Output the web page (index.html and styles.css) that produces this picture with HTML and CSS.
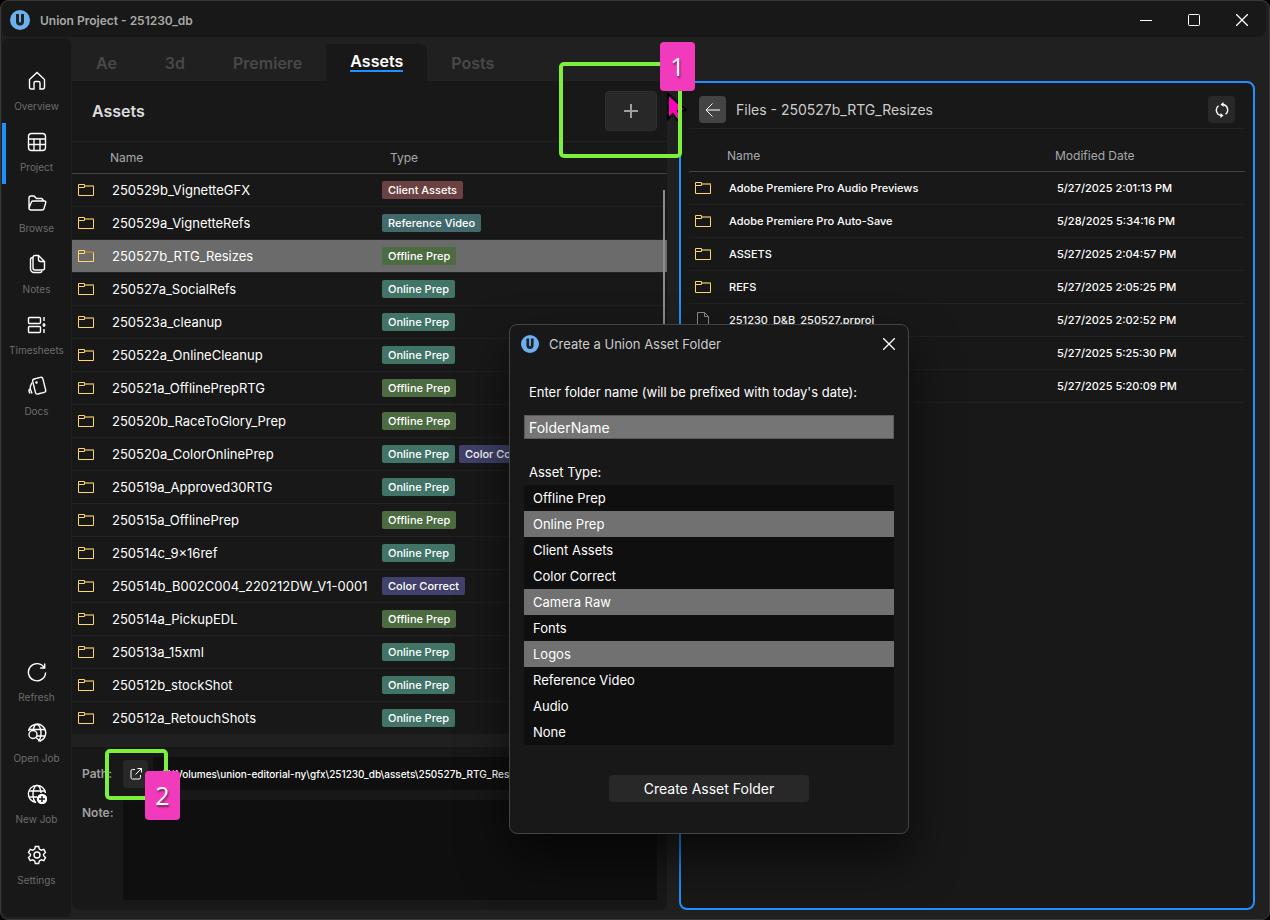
FILE: index.html
```
<!DOCTYPE html>
<html lang="en">
<head>
<meta charset="UTF-8">
<meta name="viewport" content="width=device-width, initial-scale=1.0">
<title>Union Project - 251230_db</title>
<link rel="stylesheet" href="styles.css">
</head>

<body>

<svg class="sprite" aria-hidden="true">
<symbol id="folder" viewBox="0 0 16 12">
<path d="M7 1h9v2H7z" fill="#9c8444" stroke="none"/>
<path d="M.5 3.5v-3h6v3h-6v8h15v-9" stroke="#ffd76e"/>
</symbol>
<symbol id="file" viewBox="0 0 16 16">
<path d="M2.500 15.500V.5h7l4 4v11zM9.500.5v4h4" stroke="#8a8a8a"/>
</symbol>
<symbol id="logo" viewBox="0 0 20 20">
<circle cx="10" cy="10" r="10" fill="#6cb1ec" stroke="none"/>
<path d="M7.500 4v7.500a2.500 2.500 0 0 0 5 0V4" stroke="#1f2328" stroke-width="3"/>
</symbol>
<symbol id="close" viewBox="0 0 12 12">
<path d="M0 0l12 12M12 0L0 12" stroke-width="1.300"/>
</symbol>
</svg>

<div class="window">

<header class="titlebar">
<svg class="logo"><use href="#logo"/></svg>
<h1>Union Project - 251230_db</h1>
<div class="window-buttons">
<button aria-label="Minimize"><svg viewBox="0 0 12 12"><path d="M0 6.500h12"/></svg></button>
<button aria-label="Maximize"><svg viewBox="0 0 12 12"><rect x=".5" y=".5" width="11" height="11" rx="1"/></svg></button>
<button aria-label="Close"><svg><use href="#close"/></svg></button>
</div>
</header>

<div class="main">

<nav class="sidebar">
<div class="group">
<a href="#"><svg viewBox="0 0 20 20"><path d="M2.500 8.500 10 1.500l7.500 7V16a2 2 0 0 1-2 2H13v-6a1.500 1.500 0 0 0-1.500-1.500h-3A1.500 1.500 0 0 0 7 12v6H4.500a2 2 0 0 1-2-2z"/></svg>Overview</a>
<a href="#" class="active"><svg viewBox="0 0 20 20"><rect x="1.500" y="1.500" width="17" height="17" rx="3"/><path d="M1.500 7h17M1.500 12.500h17M7 7v11.500M13 7v11.500"/></svg>Project</a>
<a href="#"><svg viewBox="0 0 20 20"><path d="M2 15V5a2 2 0 0 1 2-2h3l2.500 2.500H14a2 2 0 0 1 2 2V8M2 15l2.200-5.500A2 2 0 0 1 6 8h11.500c1 0 1.500.8 1.200 1.700L17 15.500a2 2 0 0 1-2 1.500H4a2 2 0 0 1-2-2z"/></svg>Browse</a>
<a href="#"><svg viewBox="0 0 20 20"><path d="M11.500 1.500H8a2 2 0 0 0-2 2V14a2 2 0 0 0 2 2h7.500a2 2 0 0 0 2-2V7.500zM11.500 1.500v4a2 2 0 0 0 2 2h4M6 3.500A2 2 0 0 0 3.500 5.500V15a3.500 3.500 0 0 0 3.500 3.500h6a2 2 0 0 0 2-1.500"/></svg>Notes</a>
<a href="#"><svg viewBox="0 0 20 20"><rect x="1.500" y="2.500" width="12" height="6" rx="1"/><rect x="1.500" y="11.500" width="12" height="6" rx="1"/><path d="M17 2v4M17 14v4M17 8v4M15.500 10h3"/></svg>Timesheets</a>
<a href="#"><svg viewBox="0 0 20 20"><rect x="7" y="2" width="10.500" height="15.500" rx="2" transform="rotate(-14 12 10)"/><path d="M5 6.500 3.500 10c-.5 1.500-.5 2 0 3.500L5 17.500M2.500 13c-1 1.500-.5 3 .5 4.500"/><circle cx="9.500" cy="6.500" r=".6"/></svg>Docs</a>
</div>
<div class="group">
<a href="#"><svg viewBox="0 0 20 20"><path d="M17.500 6A8.600 8.600 0 1 0 18.600 10.500M17.700 1.500v4.500h-4.500"/></svg>Refresh</a>
<a href="#"><svg viewBox="0 0 20 20"><path d="M1.500 8A8.700 8.700 0 1 1 13 18M2.500 6.500h15.500M10 13h8.500M6.200 8c.3-4 1.800-6.500 3.800-6.500s4 4 4 8.500-1.500 8-3 8"/><circle cx="6" cy="11.500" r="4"/><path d="m9 14.500 4.500 4"/></svg>Open Job</a>
<a href="#"><svg viewBox="0 0 20 20"><path d="M9 18.500A8.600 8.600 0 1 1 18.500 9M2 7h16M2 13h8M9 18.500C7.300 17.500 6 14 6 10s1.500-8.500 4-8.500S13.700 5.500 14 9"/><circle cx="15" cy="15" r="4.500" class="dot"/><path class="plus" d="M15 12v6M12 15h6"/></svg>New Job</a>
<a href="#"><svg viewBox="0 0 20 20"><path d="M8.300 1.500h3.400l.6 2.600 2 1.100 2.500-.8 1.700 3-1.900 1.800v1.600l1.900 1.800-1.700 3-2.500-.8-2 1.100-.6 2.600H8.300l-.6-2.600-2-1.100-2.500.8-1.700-3 1.900-1.800V9.200L1.500 7.400l1.700-3 2.500.8 2-1.100z"/><circle cx="10" cy="10" r="3"/></svg>Settings</a>
</div>
</nav>

<section class="assets">
<div class="tabs">
<a href="#">Ae</a>
<a href="#">3d</a>
<a href="#">Premiere</a>
<a href="#" class="active"><span>Assets</span></a>
<a href="#">Posts</a>
</div>

<div class="assets-head">
<h2>Assets</h2>
<div class="add">
<button aria-label="Add asset folder"><svg viewBox="0 0 14 14"><path d="M7 0v14M0 7h14"/></svg></button>
<div class="mark mark-add"></div>
<div class="badge badge-add">1</div>
<svg class="pointer" viewBox="0 0 20 28"><path d="M1 1v25l5-5 4 6 4-3-3-6 8-1z"/></svg>
</div>
</div>

<div class="list">
<table>
<colgroup><col class="col-icon"><col class="col-name"><col></colgroup>
<thead>
<tr><th></th><th>Name</th><th class="type">Type</th></tr>
</thead>
<tbody>
<tr><td><svg class="folder"><use href="#folder"/></svg></td><td>250529b_VignetteGFX</td><td><span class="tag client">Client Assets</span></td></tr>
<tr><td><svg class="folder"><use href="#folder"/></svg></td><td>250529a_VignetteRefs</td><td><span class="tag reference">Reference Video</span></td></tr>
<tr class="selected"><td><svg class="folder"><use href="#folder"/></svg></td><td>250527b_RTG_Resizes</td><td><span class="tag offline">Offline Prep</span></td></tr>
<tr><td><svg class="folder"><use href="#folder"/></svg></td><td>250527a_SocialRefs</td><td><span class="tag online">Online Prep</span></td></tr>
<tr><td><svg class="folder"><use href="#folder"/></svg></td><td>250523a_cleanup</td><td><span class="tag online">Online Prep</span></td></tr>
<tr><td><svg class="folder"><use href="#folder"/></svg></td><td>250522a_OnlineCleanup</td><td><span class="tag online">Online Prep</span></td></tr>
<tr><td><svg class="folder"><use href="#folder"/></svg></td><td>250521a_OfflinePrepRTG</td><td><span class="tag offline">Offline Prep</span></td></tr>
<tr><td><svg class="folder"><use href="#folder"/></svg></td><td>250520b_RaceToGlory_Prep</td><td><span class="tag offline">Offline Prep</span></td></tr>
<tr><td><svg class="folder"><use href="#folder"/></svg></td><td>250520a_ColorOnlinePrep</td><td><span class="tag online">Online Prep</span><span class="tag color">Color Correct</span></td></tr>
<tr><td><svg class="folder"><use href="#folder"/></svg></td><td>250519a_Approved30RTG</td><td><span class="tag online">Online Prep</span></td></tr>
<tr><td><svg class="folder"><use href="#folder"/></svg></td><td>250515a_OfflinePrep</td><td><span class="tag offline">Offline Prep</span></td></tr>
<tr><td><svg class="folder"><use href="#folder"/></svg></td><td>250514c_9x16ref</td><td><span class="tag online">Online Prep</span></td></tr>
<tr><td><svg class="folder"><use href="#folder"/></svg></td><td>250514b_B002C004_220212DW_V1-0001</td><td><span class="tag color">Color Correct</span></td></tr>
<tr><td><svg class="folder"><use href="#folder"/></svg></td><td>250514a_PickupEDL</td><td><span class="tag offline">Offline Prep</span></td></tr>
<tr><td><svg class="folder"><use href="#folder"/></svg></td><td>250513a_15xml</td><td><span class="tag online">Online Prep</span></td></tr>
<tr><td><svg class="folder"><use href="#folder"/></svg></td><td>250512b_stockShot</td><td><span class="tag online">Online Prep</span></td></tr>
<tr><td><svg class="folder"><use href="#folder"/></svg></td><td>250512a_RetouchShots</td><td><span class="tag online">Online Prep</span></td></tr>
</tbody>
</table>
<div class="scroll-thumb"></div>
</div>

<div class="details">
<div class="field">
<label for="path">Path:</label>
<div class="open">
<button aria-label="Open folder"><svg viewBox="0 0 12 12"><path d="M5 1.500H2.500A1.500 1.500 0 0 0 1 3v6.500A1.500 1.500 0 0 0 2.500 11H9a1.500 1.500 0 0 0 1.500-1.500V7M7.500.5h4v4M11.500.5l-6 6"/></svg></button>
<div class="mark mark-open"></div>
<div class="badge badge-open">2</div>
</div>
<input type="text" id="path" value="V:\Volumes\union-editorial-ny\gfx\251230_db\assets\250527b_RTG_Resizes" readonly>
</div>
<div class="field note">
<label for="note">Note:</label>
<textarea id="note"></textarea>
</div>
</div>
</section>

<section class="files">
<div class="files-head">
<button class="back" aria-label="Back"><svg viewBox="0 0 16 16"><path d="M15 8H1M7.500 1.500 1 8l6.500 6.500"/></svg></button>
<h2>Files - 250527b_RTG_Resizes</h2>
<button class="sync" aria-label="Sync"><svg viewBox="0 0 14 16"><path d="M8 2.500a5.500 5.500 0 0 1 2.500 9.800M6 13.500a5.500 5.500 0 0 1-2.500-9.800" stroke-width="1.400"/><path d="M8.500 0v5L5.500 2.500zM5.500 11v5l3-2.500z" fill="#fff" stroke="none"/></svg></button>
</div>
<table>
<colgroup><col class="col-icon"><col><col class="col-date"></colgroup>
<thead>
<tr><th></th><th>Name</th><th>Modified Date</th></tr>
</thead>
<tbody>
<tr><td><svg class="folder"><use href="#folder"/></svg></td><td>Adobe Premiere Pro Audio Previews</td><td>5/27/2025 2:01:13 PM</td></tr>
<tr><td><svg class="folder"><use href="#folder"/></svg></td><td>Adobe Premiere Pro Auto-Save</td><td>5/28/2025 5:34:16 PM</td></tr>
<tr><td><svg class="folder"><use href="#folder"/></svg></td><td>ASSETS</td><td>5/27/2025 2:04:57 PM</td></tr>
<tr><td><svg class="folder"><use href="#folder"/></svg></td><td>REFS</td><td>5/27/2025 2:05:25 PM</td></tr>
<tr><td><svg class="file"><use href="#file"/></svg></td><td>251230_D&amp;B_250527.prproj</td><td>5/27/2025 2:02:52 PM</td></tr>
<tr><td></td><td></td><td>5/27/2025 5:25:30 PM</td></tr>
<tr><td></td><td></td><td>5/27/2025 5:20:09 PM</td></tr>
</tbody>
</table>
</section>

</div>
</div>

<form class="dialog">
<div class="dialog-title">
<svg class="logo"><use href="#logo"/></svg>
<h2>Create a Union Asset Folder</h2>
<button type="button" aria-label="Close dialog"><svg><use href="#close"/></svg></button>
</div>
<label for="folder-name">Enter folder name (will be prefixed with today's date):</label>
<input type="text" id="folder-name" value="FolderName">
<label for="asset-type">Asset Type:</label>
<select id="asset-type" multiple size="10">
<option>Offline Prep</option>
<option selected>Online Prep</option>
<option>Client Assets</option>
<option>Color Correct</option>
<option selected>Camera Raw</option>
<option>Fonts</option>
<option selected>Logos</option>
<option>Reference Video</option>
<option>Audio</option>
<option>None</option>
</select>
<button type="button" class="create">Create Asset Folder</button>
</form>

</body>
</html>
```
FILE: styles.css
```
/* ---------- GLOBAL ---------- */
*{margin:0;padding:0;box-sizing:border-box;}
body{
height:100vh;
overflow:hidden;
background:#000;
color:#fff;
font-family:Inter,"Liberation Sans",sans-serif;
font-size:13px;
}
button,input,textarea,select{font:inherit;color:inherit;border:none;outline:none;}
button{cursor:pointer;background:none;}
a{color:inherit;text-decoration:none;}
svg{display:block;fill:none;stroke:#fff;}
.sprite{position:absolute;width:0;height:0;}
.logo{width:20px;height:20px;}
.folder{width:16px;height:12px;}
.file{width:16px;height:16px;}

/* ---------- WINDOW ---------- */
.window{
display:flex;
flex-direction:column;
height:100vh;
padding:0 1px;
background:#202020;
border:1px solid #383838;
border-radius:8px;
overflow:hidden;
}
.titlebar{
display:flex;
align-items:center;
gap:10px;
height:36px;
flex:none;
margin-right:2px;
padding:2px 0 0 8px;
background:#181818;
border-radius:8px;
}
.titlebar h1{flex:1;font-size:12px;font-weight:600;color:#a8a8a8;}
.window-buttons{display:flex;}
.window-buttons button{
display:grid;
place-items:center;
width:48px;
height:34px;
}
.window-buttons svg{width:12px;height:12px;}
.main{
display:grid;
grid-template-columns:70px minmax(0,595fr) minmax(0,601fr);
grid-template-rows:minmax(0,1fr);
flex:1;
min-height:0;
padding-top:1px;
}

/* ---------- SIDEBAR ---------- */
.sidebar{
display:flex;
flex-direction:column;
justify-content:space-between;
margin-bottom:2px;
padding:24px 0 20px;
background:#181818;
border-right:1px solid #202020;
border-radius:8px;
}
.sidebar a{
display:flex;
flex-direction:column;
align-items:center;
gap:8px;
height:61px;
padding-top:9px;
font-size:10px;
line-height:14px;
color:#6c6c6c;
border-left:4px solid transparent;
border-right:4px solid transparent;
white-space:nowrap;
}
.sidebar a.active{border-left-color:#1e90ff;}
.sidebar svg{width:20px;height:20px;stroke-width:1.4;}
.sidebar .dot{fill:#fff;}
.sidebar .plus{stroke:#181818;}

/* ---------- ASSETS ---------- */
.assets{
display:flex;
flex-direction:column;
margin-bottom:9px;
}
.tabs{
display:flex;
flex:none;
height:43px;
padding-top:6px;
}
.tabs a{
display:flex;
align-items:center;
padding:0 24px;
font-size:16px;
font-weight:600;
color:#484848;
}
.tabs a.active{background:#181818;color:#fff;border-radius:0 8px 0 0;}
.tabs a.active span{line-height:17px;border-bottom:2px solid #1e90ff;}
.assets-head{
display:flex;
align-items:center;
justify-content:space-between;
flex:none;
height:61px;
padding:0 10px 0 20px;
background:#181818;
border-bottom:1px solid #202020;
}
.assets-head h2{font-size:16px;font-weight:600;color:#ddd;}
.add,.open{position:relative;}
.add button{
display:grid;
place-items:center;
width:52px;
height:40px;
background:#282828;
border:1px solid #2e2e2e;
border-radius:4px;
}
.add button svg{width:14px;height:14px;stroke:#a0a0a0;stroke-width:2;}

.list{position:relative;flex:1;min-height:0;overflow:hidden;background:#181818;}
table{width:100%;table-layout:fixed;border-collapse:separate;border-spacing:0;}
.col-icon{width:34px;}
.col-name{width:270px;}
.col-date{width:194px;}
th{
height:32px;
padding:0 4px;
border-bottom:1px solid #444;
font-size:12px;
font-weight:400;
color:#a8a8a8;
text-align:left;
}
th.type{padding-left:14px;}
td{
height:33px;
padding:0 6px;
border-bottom:1px solid #202020;
vertical-align:middle;
white-space:nowrap;
}
.selected td{background:#6b6b6b;}
.tag{
display:inline-block;
height:18px;
margin-right:4px;
padding:0 6px;
border-radius:2px;
font-size:11px;
font-weight:500;
line-height:18px;
vertical-align:middle;
}
.client{background:#6b4141;}
.reference{background:#41696b;}
.offline{background:#4c6b41;}
.online{background:#417467;}
.color{background:#41416b;}
.scroll-thumb{
position:absolute;
top:48px;
right:2px;
width:2px;
height:420px;
background:#8c8c8c;
}

/* ---------- DETAILS ---------- */
.details{
display:flex;
flex-direction:column;
gap:10px;
flex:none;
margin-top:13px;
padding:10px;
background:#181818;
border-radius:0 0 8px 8px;
}
.field{display:flex;align-items:center;}
.field label{width:41px;flex:none;font-size:12px;font-weight:600;color:#a0a0a0;}
.open button{
display:grid;
place-items:center;
width:25px;
height:28px;
margin-right:5px;
background:#282828;
border-radius:4px;
}
.open svg{width:12px;height:12px;}
.field input{
flex:1;
min-width:0;
height:33px;
padding:0 10px;
background:#0f0f0f;
font-size:10px;
font-weight:500;
}
.note{align-items:flex-start;}
.note label{padding-top:5px;}
.field textarea{flex:1;height:100px;background:#0f0f0f;resize:none;}

/* ---------- FILES ---------- */
.files{
margin:43px 13px 9px 12px;
padding:0 8px;
background:#181818;
border:2px solid #1e90ff;
border-radius:8px;
}
.files-head{
display:flex;
align-items:center;
gap:10px;
height:46px;
padding:8px 10px 0;
border-bottom:1px solid #202020;
}
.files-head h2{flex:1;font-size:14px;font-weight:400;color:#ccc;}
.files-head button{
display:grid;
place-items:center;
width:27px;
height:27px;
border-radius:4px;
}
.back{background:#444;}
.back svg{width:16px;height:16px;}
.sync{background:#282828;}
.sync svg{width:14px;height:16px;}
.files th{height:43px;padding-top:10px;}
.files td{font-size:11px;font-weight:500;}

/* ---------- DIALOG ---------- */
.dialog{
position:absolute;
left:509px;
top:324px;
z-index:4;
display:flex;
flex-direction:column;
width:400px;
padding:0 14px 31px;
background:#181818;
border:1px solid #444;
border-radius:8px;
box-shadow:0 24px 48px rgba(0,0,0,0.6);
}
.dialog-title{
display:flex;
align-items:center;
gap:10px;
height:38px;
margin:0 -4px 20px -3px;
}
.dialog-title h2{flex:1;font-size:13px;font-weight:400;color:#ccc;}
.dialog-title .logo{width:18px;height:18px;}
.dialog-title button{padding:3px;}
.dialog-title button svg{width:12px;height:12px;}
.dialog label{padding-left:5px;line-height:18px;}
.dialog input{
height:24px;
margin:14px 0 24px;
padding:0 4px;
background:#757575;
border:1px solid #5a5a5a;
font-size:14px;
}
.dialog select{
height:260px;
margin-top:4px;
background:#0f0f0f;
overflow:hidden;
}
.dialog option{height:26px;padding:5px 9px;}
.dialog option:checked{background:linear-gradient(#717171,#717171);color:#fff;}
.create{
align-self:center;
width:200px;
height:27px;
margin-top:30px;
background:#282828;
border-radius:4px;
font-size:14px;
}

/* ---------- CALLOUTS ---------- */
.mark{
position:absolute;
z-index:2;
border:4px solid #7df03c;
border-radius:5px;
pointer-events:none;
}
.badge{
position:absolute;
z-index:3;
width:35px;
height:49px;
background:#f23abc;
border-radius:4px;
font-family:"Open Sans",sans-serif;
font-size:25px;
line-height:48px;
text-align:center;
text-shadow:1px 2px 2px rgba(0,0,0,0.5);
}
.mark-add{left:-46px;top:-29px;width:123px;height:96px;}
.badge-add{left:55px;top:-49px;}
.mark-open{left:-18px;top:-11px;width:63px;height:51px;}
.badge-open{left:22px;top:11px;}
.pointer{
position:absolute;
z-index:1;
left:62px;
top:2px;
width:20px;
height:28px;
}
.pointer path{fill:#ff00bf;stroke:#000;stroke-width:2;}
```
